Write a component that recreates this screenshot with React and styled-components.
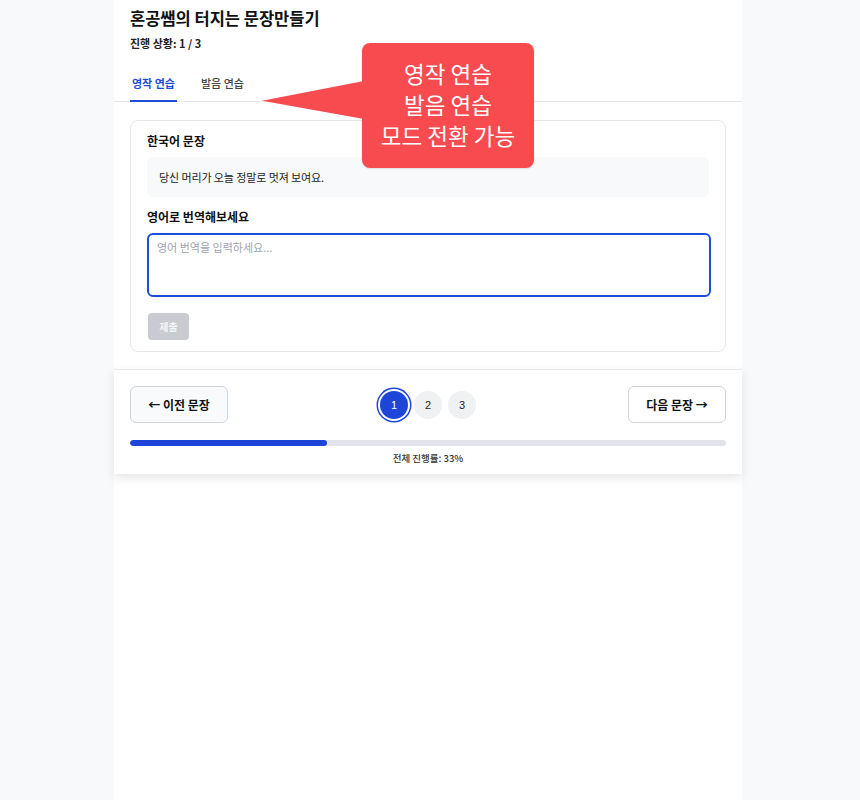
import React, { useState } from "react";
import styled, { createGlobalStyle, css } from "styled-components";

const GlobalStyle = createGlobalStyle`
  html, body { margin: 0; padding: 0; }
  body {
    background: #f8f9fa;
    font-family: "Noto Sans CJK KR", "Noto Sans", "Liberation Sans", sans-serif;
    color: #111827;
  }
  * { box-sizing: border-box; }
`;

const Page = styled.div`
  position: relative;
  width: 628px;
  min-height: 800px;
  margin-left: 114px;
  background: #ffffff;
`;

const Header = styled.header`
  padding: 7px 16px 0;
  border-bottom: 1px solid #e5e7eb;
`;

const Title = styled.h1`
  margin: 0;
  font-size: 16.5px;
  line-height: 22px;
  font-weight: 700;
  color: #111111;
`;

const Progress = styled.div`
  margin-top: 6px;
  font-size: 11px;
  line-height: 16px;
  font-weight: 600;
  color: #222;
`;

const Tabs = styled.nav`
  display: flex;
  gap: 22px;
  margin-top: 14px;
`;

const Tab = styled.button`
  border: none;
  background: none;
  padding: 10px 2px 9px;
  font-family: inherit;
  font-size: 11px;
  line-height: 16px;
  font-weight: ${(p) => (p.$active ? 700 : 500)};
  color: ${(p) => (p.$active ? "#1d4ed8" : "#444")};
  border-bottom: 2px solid ${(p) => (p.$active ? "#1d4ed8" : "transparent")};
  margin-bottom: -1px;
  cursor: pointer;
`;

const Content = styled.main`
  padding: 18px 16px 17px;
`;

const Card = styled.section`
  border: 1px solid #e5e7eb;
  border-radius: 8px;
  padding: 11px 16px 11px;
`;

const Label = styled.div`
  font-size: 12px;
  line-height: 18px;
  font-weight: 700;
  color: #111;
  margin-top: ${(p) => p.$mt || 0}px;
`;

const Sentence = styled.div`
  margin-top: 7px;
  background: #f8f9fa;
  border-radius: 6px;
  padding: 12px 12px;
  font-size: 11px;
  line-height: 16px;
  letter-spacing: -0.1px;
  color: #222;
`;

const Answer = styled.textarea`
  display: block;
  margin-top: 7px;
  width: calc(100% + 2px);
  height: 64px;
  border: 2px solid #1d4ed8;
  border-radius: 6px;
  padding: 4px 8px;
  font-family: inherit;
  font-size: 11px;
  line-height: 16px;
  resize: none;
  outline: none;
  color: #111;
  &::placeholder { color: #9ca3af; }
`;

const Submit = styled.button`
  margin-top: 16px;
  margin-left: 1px;
  width: 41px;
  height: 27px;
  border: none;
  border-radius: 4px;
  background: #c9cbd1;
  color: #f3f4f6;
  font-family: inherit;
  font-size: 10px;
  font-weight: 700;
  display: block;
`;

const Footer = styled.footer`
  border-top: 1px solid #e5e7eb;
  box-shadow: 0 4px 10px rgba(0, 0, 0, 0.1);
  padding: 16px 16px 9px;
  background: #fff;
`;

const NavRow = styled.div`
  display: flex;
  align-items: center;
  justify-content: space-between;
`;

const NavButton = styled.button`
  width: 98px;
  height: 37px;
  border: 1px solid #d1d5db;
  border-radius: 6px;
  background: ${(p) => (p.$muted ? "#f9fafb" : "#ffffff")};
  font-family: inherit;
  font-size: 12px;
  font-weight: 600;
  color: #111;
  cursor: pointer;
`;

const Pages = styled.div`
  display: flex;
  gap: 6px;
`;

const PageDot = styled.button`
  width: 28px;
  height: 28px;
  border-radius: 50%;
  border: none;
  padding: 0;
  font-family: "Liberation Sans", sans-serif;
  font-size: 11px;
  background: #f0f1f3;
  color: #222;
  ${(p) =>
    p.$active &&
    css`
      background: #1d46d8;
      color: #fff;
      box-shadow: 0 0 0 2px #fff, 0 0 0 3.5px #1d46d8;
    `}
`;

const Bar = styled.div`
  margin-top: 17px;
  height: 6px;
  border-radius: 3px;
  background: #e2e4e9;
  overflow: hidden;
`;

const BarFill = styled.div`
  height: 100%;
  border-radius: 3px;
  background: #1d46d8;
`;

const BarText = styled.div`
  margin-top: 5px;
  text-align: center;
  font-size: 9.5px;
  line-height: 14px;
  font-weight: 500;
  color: #333;
`;

const Callout = styled.div`
  position: absolute;
  left: 248px;
  top: 43px;
  width: 172px;
  height: 125px;
  border-radius: 8px;
  background: #f84b4f;
  color: #fff;
  display: flex;
  flex-direction: column;
  align-items: center;
  justify-content: center;
  padding-bottom: 3px;
  font-size: 22.5px;
  line-height: 31px;
  text-align: center;
  box-shadow: 0 1px 2px rgba(0, 0, 0, 0.1);
  &::before {
    content: "";
    position: absolute;
    left: -100px;
    top: 38px;
    width: 102px;
    height: 38px;
    background: #f84b4f;
    clip-path: polygon(0 52%, 100% 0, 100% 100%);
  }
`;

export default function App() {
  const [mode, setMode] = useState("write");
  const progress = 33;
  return (
    <>
      <GlobalStyle />
      <Page>
        <Header>
          <Title>혼공쌤의 터지는 문장만들기</Title>
          <Progress>진행 상황: 1 / 3</Progress>
          <Tabs>
            <Tab $active={mode === "write"} onClick={() => setMode("write")}>
              영작 연습
            </Tab>
            <Tab $active={mode === "speak"} onClick={() => setMode("speak")}>
              발음 연습
            </Tab>
          </Tabs>
        </Header>
        <Content>
          <Card>
            <Label>한국어 문장</Label>
            <Sentence>당신 머리가 오늘 정말로 멋져 보여요.</Sentence>
            <Label $mt={11}>영어로 번역해보세요</Label>
            <Answer placeholder="영어 번역을 입력하세요..." />
            <Submit disabled>제출</Submit>
          </Card>
        </Content>
        <Footer>
          <NavRow>
            <NavButton $muted>← 이전 문장</NavButton>
            <Pages>
              <PageDot $active>1</PageDot>
              <PageDot>2</PageDot>
              <PageDot>3</PageDot>
            </Pages>
            <NavButton>다음 문장 →</NavButton>
          </NavRow>
          <Bar>
            <BarFill style={{ width: `${progress}%` }} />
          </Bar>
          <BarText>전체 진행률: {progress}%</BarText>
        </Footer>
        <Callout>
          <span>영작 연습</span>
          <span>발음 연습</span>
          <span>모드 전환 가능</span>
        </Callout>
      </Page>
    </>
  );
}
